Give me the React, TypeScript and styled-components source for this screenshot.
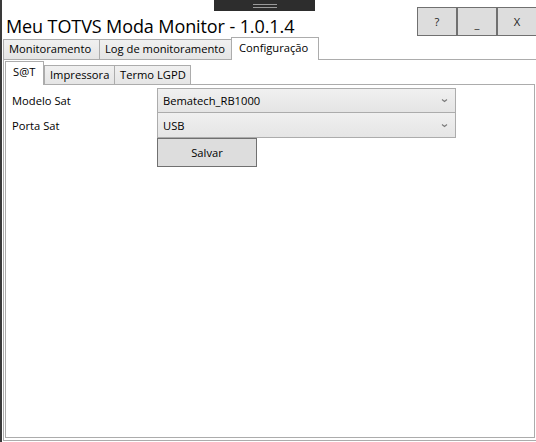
import React from "react";
import styled, { createGlobalStyle } from "styled-components";

const Global = createGlobalStyle`
  html, body { margin: 0; padding: 0; background: #ffffff; }
  body { font-family: "Open Sans", "Noto Sans", "Liberation Sans", sans-serif; color: #000; }
`;

const Window = styled.div`
  position: relative;
  width: 536px;
  height: 442px;
  box-sizing: border-box;
  border-left: 2px solid #3a3a3a;
  overflow: hidden;
  background: #fff;
  display: flex;
  flex-direction: column;
`;

const Grip = styled.div`
  position: absolute;
  left: 212px;
  top: 0;
  width: 101px;
  height: 11px;
  background: #2d2d2d;
  display: flex;
  flex-direction: column;
  align-items: center;
  justify-content: center;
  gap: 2px;
`;

const GripLine = styled.div`
  width: 24px;
  height: 1px;
  background: #9a9a9a;
`;

const Header = styled.div`
  display: flex;
  justify-content: space-between;
  align-items: flex-start;
  height: 38px;
  padding-left: 4px;
`;

const Title = styled.div`
  font-size: 18px;
  line-height: 24px;
  margin-top: 14px;
  letter-spacing: -0.1px;
`;

const Buttons = styled.div`
  display: flex;
  margin-top: 7px;
  margin-right: -1px;
`;

const WinButton = styled.div<{ $low?: boolean }>`
  width: 38px;
  height: ${(p) => (p.$low ? 23 : 27)}px;
  padding-bottom: ${(p) => (p.$low ? 4 : 0)}px;
  background: #dddddd;
  border: 1px solid #707070;
  display: flex;
  align-items: ${(p) => (p.$low ? "flex-end" : "center")};
  justify-content: center;
  font-size: 11.2px;
  color: #222;
`;

const TabStrip = styled.div`
  display: flex;
  align-items: flex-end;
  padding-left: 1px;
  height: 22px;
  position: relative;
  z-index: 1;
`;

const Tab = styled.div<{ $w: number; $sel?: boolean; $h: number; $first?: boolean }>`
  box-sizing: border-box;
  width: ${(p) => p.$w}px;
  height: ${(p) => p.$h}px;
  margin-left: ${(p) => (p.$sel && !p.$first ? "-1px" : "0")};
  border: 1px solid #acacac;
  border-right: ${(p) => (p.$sel ? "1px solid #acacac" : "none")};
  border-bottom: ${(p) => (p.$sel ? "none" : "1px solid #acacac")};
  background: ${(p) => (p.$sel ? "#ffffff" : "linear-gradient(#f0f0f0, #e5e5e5)")};
  font-size: 11.2px;
  line-height: 16px;
  padding: ${(p) => (p.$sel ? "2px 0 0 7px" : "1px 0 0 5px")};
  white-space: nowrap;
  overflow: hidden;
  &:last-child {
    border-right: 1px solid #acacac;
  }
`;

const MainPanel = styled.div`
  box-sizing: border-box;
  flex: 1;
  margin: -1px -3px 1px 1px;
  border: 1px solid #acacac;
  padding: 1px 3px 2px 1px;
  display: flex;
  flex-direction: column;
`;

const SubStrip = styled.div`
  display: flex;
  align-items: flex-end;
  height: 24px;
  position: relative;
  z-index: 1;
`;

const SubPanel = styled.div`
  box-sizing: border-box;
  flex: 1;
  margin-top: -1px;
  border: 1px solid #acacac;
  padding: 3px 0 0 6px;
  display: grid;
  grid-template-columns: 145px 299px;
  grid-auto-rows: min-content;
  align-content: start;
`;

const Label = styled.div`
  font-size: 11.2px;
  display: flex;
  align-items: center;
  height: 25px;
`;

const Combo = styled.div<{ $first?: boolean }>`
  box-sizing: border-box;
  height: ${(p) => (p.$first ? 25 : 26)}px;
  margin-top: ${(p) => (p.$first ? 0 : -1)}px;
  border: 1px solid #acacac;
  background: linear-gradient(#f0f0f0, #e5e5e5);
  display: flex;
  align-items: center;
  justify-content: space-between;
  padding: 0 7px 0 5px;
  font-size: 11.2px;
`;

const SaveButton = styled.div`
  box-sizing: border-box;
  width: 100px;
  height: 29px;
  margin-top: 0px;
  grid-column: 2;
  background: #dddddd;
  border: 1px solid #707070;
  display: flex;
  align-items: center;
  justify-content: center;
  font-size: 11.2px;
`;

const Chevron = () => (
  <svg width="7" height="5" viewBox="0 0 7 5">
    <path d="M1 1.5 L3.5 3.5 L6 1.5" fill="none" stroke="#7a7a7a" strokeWidth="1.1" />
  </svg>
);

export default function App() {
  return (
    <>
      <Global />
      <Window>
        <Grip>
          <GripLine />
          <GripLine />
        </Grip>
        <Header>
          <Title>Meu TOTVS Moda Monitor - 1.0.1.4</Title>
          <Buttons>
            <WinButton>?</WinButton>
            <WinButton $low>_</WinButton>
            <WinButton>X</WinButton>
          </Buttons>
        </Header>
        <TabStrip>
          <Tab $w={96} $h={21}>Monitoramento</Tab>
          <Tab $w={133} $h={21}>Log de monitoramento</Tab>
          <Tab $w={88} $h={23} $sel>Configuração</Tab>
        </TabStrip>
        <MainPanel>
          <SubStrip>
            <Tab $w={39} $h={24} $sel $first>S@T</Tab>
            <Tab $w={70} $h={20}>Impressora</Tab>
            <Tab $w={77} $h={20}>Termo LGPD</Tab>
          </SubStrip>
          <SubPanel>
            <Label>Modelo Sat</Label>
            <Combo $first>
              <span>Bematech_RB1000</span>
              <Chevron />
            </Combo>
            <Label>Porta Sat</Label>
            <Combo>
              <span>USB</span>
              <Chevron />
            </Combo>
            <SaveButton>Salvar</SaveButton>
          </SubPanel>
        </MainPanel>
      </Window>
    </>
  );
}
